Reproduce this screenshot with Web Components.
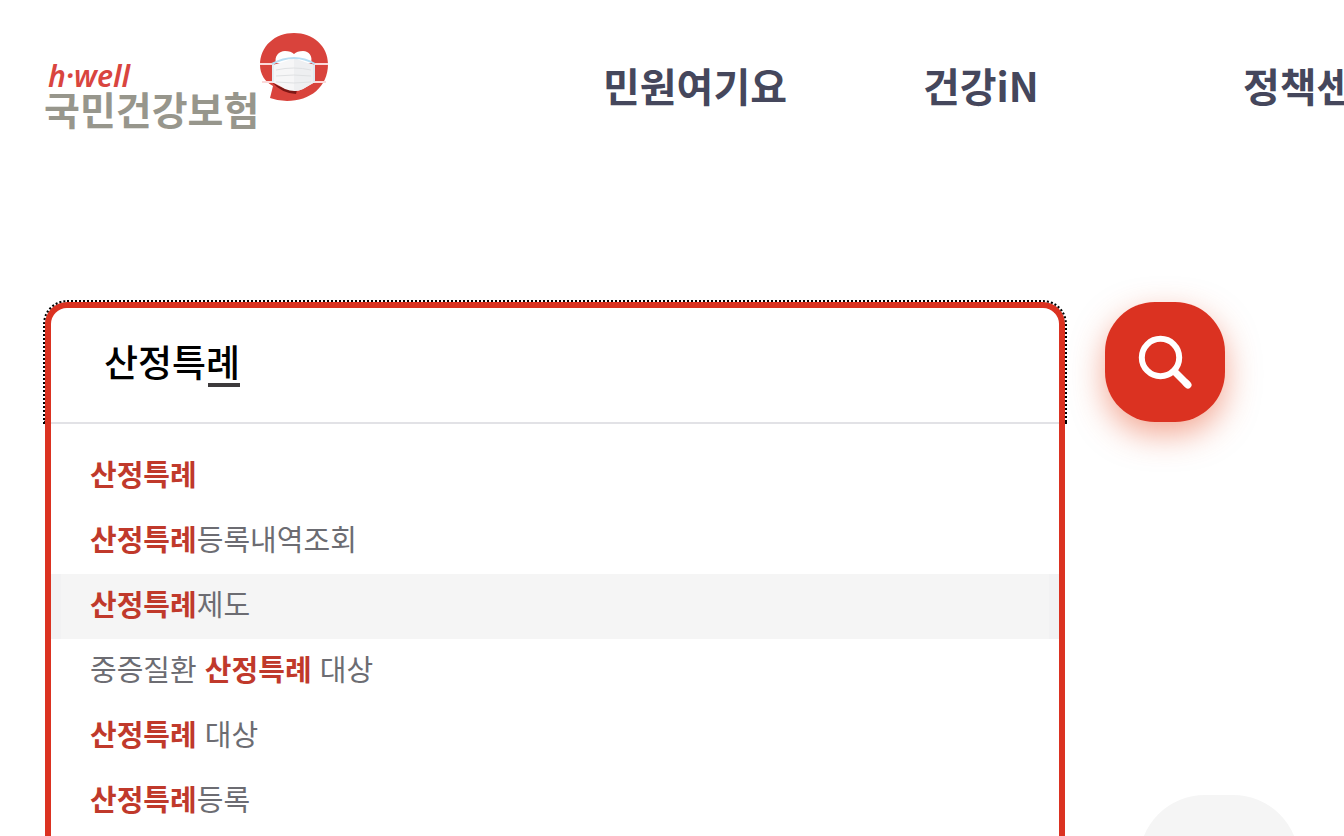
<!DOCTYPE html>
<html lang="ko">
<head>
<meta charset="UTF-8">
<meta name="viewport" content="width=device-width, initial-scale=1">
<title>국민건강보험</title>
<style>
  html, body {
    height: 100%;
  }
  body {
    margin: 0;
    background: #fff;
    font-family: "Noto Sans CJK KR", sans-serif;
    overflow: hidden;
  }
</style>
</head>
<body>
<nhis-page>
  <nhis-header slot="header">
    <nhis-logo slot="logo"></nhis-logo>
    <nhis-nav-item href="#minwon">민원여기요</nhis-nav-item>
    <nhis-nav-item href="#health">건강iN</nhis-nav-item>
    <nhis-nav-item href="#policy">정책센터</nhis-nav-item>
  </nhis-header>
  <search-box value="산정특례">
    <suggest-item><b>산정특례</b></suggest-item>
    <suggest-item><b>산정특례</b>등록내역조회</suggest-item>
    <suggest-item active><b>산정특례</b>제도</suggest-item>
    <suggest-item>중증질환 <b>산정특례</b> 대상</suggest-item>
    <suggest-item><b>산정특례</b> 대상</suggest-item>
    <suggest-item><b>산정특례</b>등록</suggest-item>
  </search-box>
  <quick-button slot="floating"></quick-button>
</nhis-page>

<script>
class NhisPage extends HTMLElement {
  connectedCallback() {
    this.attachShadow({ mode: 'open' });
    this.shadowRoot.innerHTML = `
      <style>
        :host {
          display: flex;
          flex-direction: column;
          height: 100%;
        }
        main {
          flex: 1;
          display: flex;
          padding: 140px 119px 0 45px;
        }
      </style>
      <slot name="header"></slot>
      <main><slot></slot></main>
      <slot name="floating"></slot>
    `;
  }
}

class NhisHeader extends HTMLElement {
  connectedCallback() {
    this.attachShadow({ mode: 'open' });
    this.shadowRoot.innerHTML = `
      <style>
        :host {
          display: block;
        }
        header {
          display: grid;
          grid-template-columns: 603px 1fr;
          height: 162px;
          overflow: hidden;
        }
        .logo {
          padding: 32px 0 0 44px;
        }
        nav {
          display: flex;
          align-items: center;
          padding-top: 8px;
        }
      </style>
      <header>
        <div class="logo"><slot name="logo"></slot></div>
        <nav aria-label="주메뉴"><slot></slot></nav>
      </header>
    `;
  }
}

class NhisNavItem extends HTMLElement {
  connectedCallback() {
    this.attachShadow({ mode: 'open' });
    this.shadowRoot.innerHTML = `
      <style>
        :host {
          flex: 0 0 320px;
        }
        a {
          color: #45475c;
          font-size: 40px;
          font-weight: 700;
          line-height: 60px;
          text-decoration: none;
          white-space: nowrap;
        }
      </style>
      <a href="${this.getAttribute('href')}"><slot></slot></a>
    `;
  }
}

class NhisLogo extends HTMLElement {
  connectedCallback() {
    this.attachShadow({ mode: 'open' });
    this.shadowRoot.innerHTML = `
      <style>
        :host {
          display: block;
        }
        a {
          display: flex;
          align-items: flex-start;
          text-decoration: none;
        }
        .words {
          display: flex;
          flex-direction: column;
          padding-top: 28px;
        }
        .en {
          padding-left: 4px;
          color: #d9453f;
          font: italic 600 30px/32px "Noto Sans", sans-serif;
        }
        .ko {
          color: #97968c;
          font-size: 39px;
          font-weight: 700;
          line-height: 32px;
        }
        svg {
          display: block;
          width: 70px;
          height: 70px;
        }
      </style>
      <a href="#home">
        <span class="words">
          <span class="en">h·well</span>
          <span class="ko">국민건강보험</span>
        </span>
        <svg viewBox="0 0 70 70" aria-hidden="true">
          <path d="M35 1C54 1 69 14 69 32C69 55 51 69 28 69Q19 69 11 66L14 54C6 50 1 42 1 33C1 14 16 1 35 1Z" fill="#d9433c"/>
          <path d="M17 31C15 24 20 19 26 19Q32 19 35 22Q38 19 44 19C50 19 54 24 52 31Z" fill="#fff"/>
          <path d="M13 50Q24 58 38 58L37 62Q22 61 13 50Z" fill="#7d1715"/>
          <path d="M1 32H15M55 32H69M3 50H16M54 50H67" stroke="#fbd9d9" stroke-width="2"/>
          <path d="M13 33Q23 31 35 26Q47 31 56 33V50Q49 54 44 57Q36 61 26 57Q21 54 13 50Z" fill="#f6f6f7"/>
          <path d="M35 26Q47 31 56 33V50Q49 54 44 57Q40 59 35 59Z" fill="#eeeff1"/>
          <path d="M13 32Q24 26 35 26Q46 26 56 32" fill="none" stroke="#b9def3" stroke-width="2"/>
          <path d="M17 38Q35 34 52 38M17 44Q35 42 52 44M17 50Q35 52 52 50" fill="none" stroke="#dfe1e3"/>
          <path d="M14 33V50M55 33V50" stroke="#d2e4ed"/>
        </svg>
      </a>
    `;
  }
}

class SearchBox extends HTMLElement {
  connectedCallback() {
    this.attachShadow({ mode: 'open' });
    this.shadowRoot.innerHTML = `
      <style>
        :host {
          --red: #db3221;
          flex: 1;
          display: flex;
        }
        form {
          flex: 1;
          display: flex;
          align-items: stretch;
          gap: 40px;
        }
        .panel {
          flex: 1;
          display: flex;
          flex-direction: column;
        }
        .field {
          position: relative;
          box-sizing: border-box;
          height: 120px;
          border: 6px solid var(--red);
          border-bottom: 0;
          border-radius: 22px 22px 0 0;
          outline: 2px dotted #000;
        }
        input {
          box-sizing: border-box;
          width: 100%;
          height: 100%;
          padding: 0 53px 8px;
          border: 0;
          outline: 0;
          background: none;
          color: #000;
          font: 500 37px/56px "Noto Sans CJK KR", sans-serif;
        }
        /* underline of the syllable still being composed */
        .composing {
          position: absolute;
          left: 157px;
          top: 75px;
          width: 32px;
          height: 4px;
          background: #3d3a3c;
        }
        .list {
          position: relative;
          flex: 1;
          border: 6px solid var(--red);
          border-width: 0 6px;
          background: #fff;
        }
        ul {
          margin: 0;
          padding: 20px 0 0;
          border-top: 2px solid #e2e2e6;
          list-style: none;
        }
        button {
          display: flex;
          align-items: center;
          justify-content: center;
          width: 120px;
          height: 120px;
          padding: 0;
          border: 0;
          border-radius: 50px;
          background: var(--red);
          box-shadow: 0 12px 32px rgba(232, 82, 42, 0.5);
          cursor: pointer;
        }
        svg {
          width: 54px;
          height: 54px;
        }
      </style>
      <form role="search">
        <div class="panel">
          <div class="field">
            <input type="text" aria-label="검색어" autocomplete="off" value="${this.getAttribute('value')}">
            <span class="composing"></span>
          </div>
          <div class="list"><ul><slot></slot></ul></div>
        </div>
        <button type="submit" aria-label="검색">
          <svg viewBox="0 0 54 54" fill="none" stroke="#fff" aria-hidden="true">
            <circle cx="22.500" cy="22.500" r="18.700" stroke-width="6"/>
            <path d="M35 35L50 50" stroke-width="7"/>
            <path d="M48 48L50 50" stroke-width="7" stroke-linecap="round"/>
          </svg>
        </button>
      </form>
    `;
  }
}

class SuggestItem extends HTMLElement {
  connectedCallback() {
    this.attachShadow({ mode: 'open' });
    this.shadowRoot.innerHTML = `
      <style>
        :host {
          display: block;
        }
        li {
          display: block;
        }
        a {
          display: block;
          box-sizing: border-box;
          height: 65px;
          padding: 0 39px;
          color: #6c6c72;
          font-size: 29px;
          line-height: 58px;
          text-decoration: none;
          white-space: nowrap;
        }
        :host([active]) a {
          background: #f5f5f5;
          box-shadow: inset 10px 0 #f2f2f3, inset -10px 0 #f2f2f3;
        }
        ::slotted(b) {
          color: #c0392b;
          font-weight: 700;
        }
      </style>
      <li><a href="#search"><slot></slot></a></li>
    `;
  }
}

class QuickButton extends HTMLElement {
  connectedCallback() {
    this.attachShadow({ mode: 'open' });
    this.shadowRoot.innerHTML = `
      <style>
        :host {
          position: fixed;
          right: 45px;
          bottom: -119px;
        }
        button {
          display: block;
          width: 160px;
          height: 160px;
          border: 0;
          border-radius: 66px;
          background: #f5f5f5;
        }
      </style>
      <button type="button" aria-label="맨 위로"></button>
    `;
  }
}

customElements.define('nhis-page', NhisPage);
customElements.define('nhis-header', NhisHeader);
customElements.define('nhis-nav-item', NhisNavItem);
customElements.define('nhis-logo', NhisLogo);
customElements.define('search-box', SearchBox);
customElements.define('suggest-item', SuggestItem);
customElements.define('quick-button', QuickButton);
</script>
</body>
</html>
